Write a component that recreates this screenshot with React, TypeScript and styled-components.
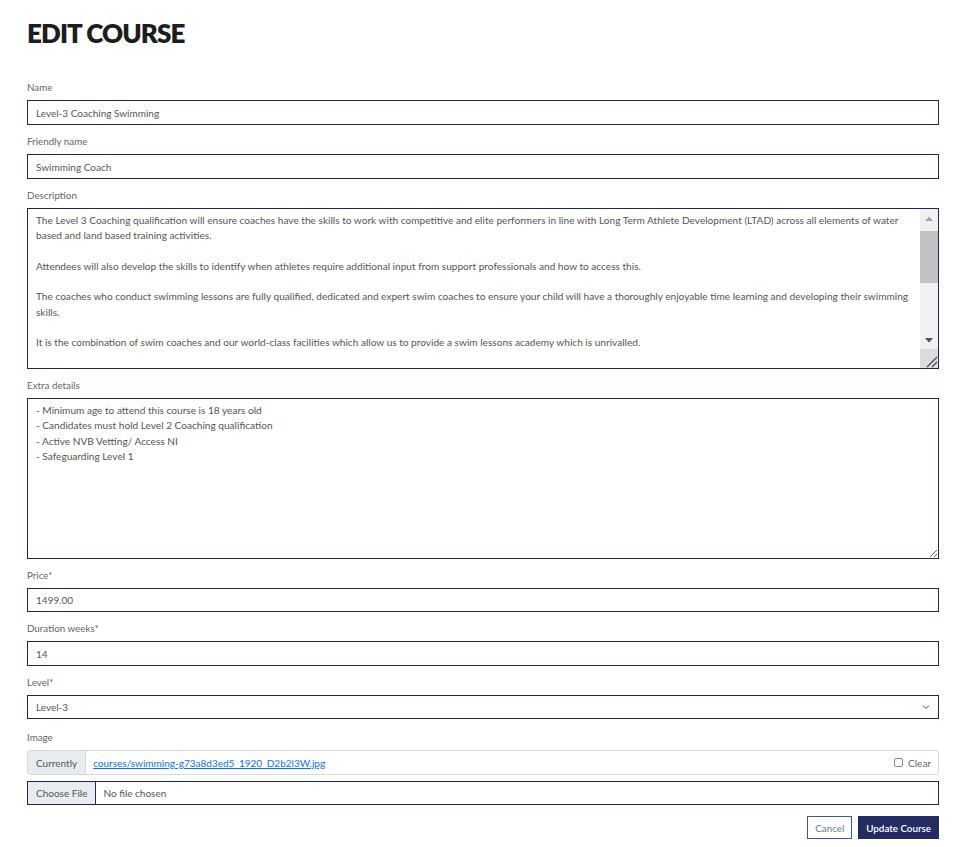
import React from "react";
import styled, { createGlobalStyle } from "styled-components";

const Global = createGlobalStyle`
  html, body { margin: 0; padding: 0; background: #fff; }
  body { font-family: Lato, "Noto Sans", Arial, sans-serif; color: #555; }
  * { box-sizing: border-box; }
`;

const NAVY = "#1e2660";

const Page = styled.div`
  padding: 17px 35px 20px 27px;
  width: 974px;
`;

const Title = styled.h1`
  margin: 0 0 31px 0;
  font-family: Lato, "Noto Sans", sans-serif;
  font-weight: 800;
  font-size: 26px;
  line-height: 32px;
  color: #1d1d1f;
  letter-spacing: -0.9px;
`;

const Form = styled.form`
  display: flex;
  flex-direction: column;
`;

const Field = styled.div`
  display: flex;
  flex-direction: column;
  margin-bottom: 9px;
`;

const Label = styled.label<{ $gapTop?: number }>`
  font-size: 9.8px;
  line-height: 14px;
  color: #666;
  margin-top: ${(p) => p.$gapTop ?? 0}px;
  margin-bottom: 6px;
`;

const Input = styled.input<{ $h?: number }>`
  height: ${(p) => p.$h ?? 25}px;
  border: 1px solid ${NAVY};
  border-radius: 0;
  padding: 0 8px;
  font-family: inherit;
  font-size: 10px;
  color: #555;
  outline: none;
`;

const TextArea = styled.textarea<{ $scroll?: boolean }>`
  height: 161px;
  border: 1px solid ${NAVY};
  border-radius: 0;
  padding: 4px ${(p) => (p.$scroll ? 26 : 8)}px 4px 8px;
  font-family: inherit;
  font-size: 10.1px;
  line-height: 15.3px;
  color: #555;
  resize: ${(p) => (p.$scroll ? "none" : "vertical")};
  outline: none;
  overflow: hidden;
`;

const AreaWrap = styled.div`
  position: relative;
  display: flex;
  flex-direction: column;
`;

const Scrollbar = styled.div`
  position: absolute;
  top: 1px;
  right: 1px;
  bottom: 1px;
  width: 18px;
  display: flex;
  flex-direction: column;
  background: #f1f1f1;
`;

const ScrollButton = styled.div`
  height: 18px;
  display: flex;
  align-items: center;
  justify-content: center;
`;

const Track = styled.div`
  flex: 1;
  padding-top: 4px;
`;

const Thumb = styled.div`
  height: 52px;
  background: #c1c1c1;
`;

const Corner = styled.div`
  height: 19px;
  background: #dcdcdc;
  display: flex;
  align-items: flex-end;
  justify-content: flex-end;
`;

const SelectWrap = styled.div`
  position: relative;
  display: flex;
`;

const Select = styled.select`
  appearance: none;
  -webkit-appearance: none;
  flex: 1;
  height: 24px;
  border: 1px solid ${NAVY};
  border-radius: 0;
  padding: 0 8px;
  background: #fff;
  font-family: inherit;
  font-size: 10px;
  color: #555;
  outline: none;
`;

const Chevron = styled.svg`
  position: absolute;
  right: 9px;
  top: 9px;
  pointer-events: none;
`;

const Group = styled.div`
  display: flex;
  height: 25px;
  border: 1px solid #d5d8dc;
  border-radius: 3px;
  margin-bottom: 6px;
  font-size: 10px;
`;

const Addon = styled.span`
  display: flex;
  align-items: center;
  padding: 0 8px;
  background: #e9ecef;
  border-right: 1px solid #d5d8dc;
  color: #555;
`;

const LinkBox = styled.div`
  flex: 1;
  display: flex;
  align-items: center;
  padding: 0 7px;
  justify-content: space-between;
`;

const FileLink = styled.a`
  color: #0d6efd;
  text-decoration: underline;
`;

const ClearLabel = styled.label`
  display: flex;
  align-items: center;
  gap: 5px;
  color: #666;
`;

const Check = styled.span`
  width: 9px;
  height: 9px;
  border: 1px solid #888;
  border-radius: 2px;
`;

const FileBox = styled.div`
  display: flex;
  height: 24px;
  border: 1px solid ${NAVY};
  font-size: 10px;
  margin-bottom: 11px;
`;

const FileButton = styled.span`
  display: flex;
  align-items: center;
  padding: 0 8px;
  background: #e9ecef;
  border-right: 1px solid ${NAVY};
  color: #555;
`;

const FileText = styled.span`
  display: flex;
  align-items: center;
  padding: 0 7px;
  color: #555;
`;

const Actions = styled.div`
  display: flex;
  justify-content: flex-end;
  gap: 6px;
`;

const Button = styled.button<{ $primary?: boolean }>`
  height: 23px;
  padding: 0 7px;
  font-family: inherit;
  font-size: 9.8px;
  border-radius: 0;
  border: 1px solid ${(p) => (p.$primary ? "#232c63" : "#3b55a8")};
  background: ${(p) => (p.$primary ? "#232c63" : "#fff")};
  color: ${(p) => (p.$primary ? "#fff" : "#6b7a99")};
  font-weight: ${(p) => (p.$primary ? 600 : 400)};
`;

const description = `The Level 3 Coaching qualification will ensure coaches have the skills to work with competitive and elite performers in line with Long Term Athlete Development (LTAD) across all elements of water
based and land based training activities.

Attendees will also develop the skills to identify when athletes require additional input from support professionals and how to access this.

The coaches who conduct swimming lessons are fully qualified, dedicated and expert swim coaches to ensure your child will have a thoroughly enjoyable time learning and developing their swimming
skills.

It is the combination of swim coaches and our world-class facilities which allow us to provide a swim lessons academy which is unrivalled.

Our courses are delivered by experienced tutors who will support you throughout your learning journey.

On completion of the course, candidates will be able to plan, deliver and evaluate coaching sessions for competitive swimmers.

Places are limited, so early booking is recommended.`;

const extra = `- Minimum age to attend this course is 18 years old
- Candidates must hold Level 2 Coaching qualification
- Active NVB Vetting/ Access NI
- Safeguarding Level 1`;

export default function App() {
  return (
    <Page>
      <Global />
      <Title>EDIT COURSE</Title>
      <Form onSubmit={(e) => e.preventDefault()}>
        <Field>
          <Label>Name</Label>
          <Input defaultValue="Level-3 Coaching Swimming" />
        </Field>
        <Field>
          <Label>Friendly name</Label>
          <Input defaultValue="Swimming Coach" />
        </Field>
        <Field>
          <Label>Description</Label>
          <AreaWrap>
            <TextArea $scroll defaultValue={description} />
            <Scrollbar aria-hidden>
              <ScrollButton>
                <svg width="8" height="5" viewBox="0 0 8 5">
                  <path d="M0 5 L4 0.5 L8 5 Z" fill="#a3a3a3" />
                </svg>
              </ScrollButton>
              <Track>
                <Thumb />
              </Track>
              <ScrollButton>
                <svg width="8" height="5" viewBox="0 0 8 5">
                  <path d="M0 0 L4 4.5 L8 0 Z" fill="#505050" />
                </svg>
              </ScrollButton>
              <Corner>
                <svg width="14" height="14" viewBox="0 0 14 14">
                  <path d="M3 13 L13 3 M8 13 L13 8" stroke="#444" strokeWidth="1.1" fill="none" />
                </svg>
              </Corner>
            </Scrollbar>
          </AreaWrap>
        </Field>
        <Field>
          <Label>Extra details</Label>
          <TextArea defaultValue={extra} />
        </Field>
        <Field>
          <Label>Price*</Label>
          <Input $h={24} defaultValue="1499.00" />
        </Field>
        <Field>
          <Label>Duration weeks*</Label>
          <Input defaultValue="14" />
        </Field>
        <Field>
          <Label>Level*</Label>
          <SelectWrap>
            <Select defaultValue="3">
              <option value="1">Level-1</option>
              <option value="2">Level-2</option>
              <option value="3">Level-3</option>
            </Select>
            <Chevron width="8" height="6" viewBox="0 0 8 6">
              <path d="M1 1.5 L4 4.5 L7 1.5" fill="none" stroke="#444" strokeWidth="1" />
            </Chevron>
          </SelectWrap>
        </Field>
        <Label $gapTop={2}>Image</Label>
        <Group>
          <Addon>Currently</Addon>
          <LinkBox>
            <FileLink href="#">courses/swimming-g73a8d3ed5_1920_D2b2l3W.jpg</FileLink>
            <ClearLabel>
              <Check />
              Clear
            </ClearLabel>
          </LinkBox>
        </Group>
        <FileBox>
          <FileButton>Choose File</FileButton>
          <FileText>No file chosen</FileText>
        </FileBox>
        <Actions>
          <Button type="button">Cancel</Button>
          <Button type="submit" $primary>
            Update Course
          </Button>
        </Actions>
      </Form>
    </Page>
  );
}
